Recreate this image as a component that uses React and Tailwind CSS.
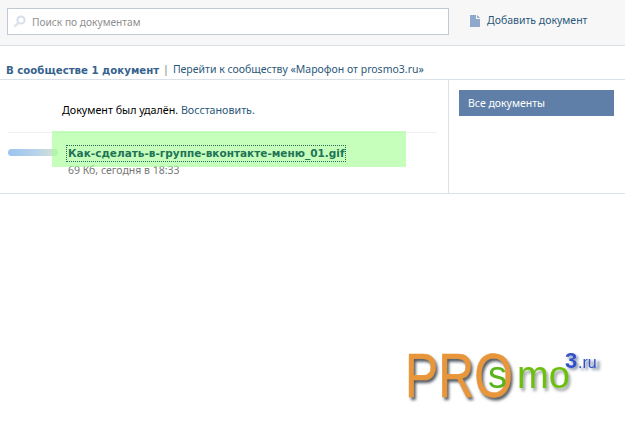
const Logo = () => (
  <svg width="210" height="64" viewBox="0 0 210 64" className="block">
    <defs>
      <filter id="soft" x="-10%" y="-10%" width="130%" height="130%">
        <feGaussianBlur stdDeviation="0.4" />
      </filter>
      <filter id="shadow" x="-10%" y="-10%" width="130%" height="130%">
        <feGaussianBlur stdDeviation="1.5" />
      </filter>
    </defs>
    <g fontFamily="'Liberation Sans', sans-serif">
      <g filter="url(#shadow)">
        <text x="7" y="58" fontSize="63" fill="#50565f" textLength="108" lengthAdjust="spacingAndGlyphs">PRO</text>
        <text x="119" y="49" fontSize="38" fill="#9aa0a0">mo</text>
        <text x="167" y="28" fontSize="22" fontWeight="700" fill="#7d8aa5">3</text>
        <text x="180" y="28" fontSize="16" fontWeight="700" fill="#7d8aa5">.ru</text>
      </g>
      <g filter="url(#soft)">
        <text x="5" y="55" fontSize="63" fill="#e8963a" stroke="#e8963a" strokeWidth="0.6" textLength="108" lengthAdjust="spacingAndGlyphs">PRO</text>
        <text x="88" y="46" fontSize="38" fill="#58b41a">s</text>
        <text x="117" y="46" fontSize="38" fill="#6cc010">mo</text>
        <text x="165" y="26" fontSize="22" fontWeight="700" fill="#3050c8">3</text>
        <text x="178" y="26" fontSize="16" fill="#3050c8">.ru</text>
      </g>
    </g>
  </svg>
);

export default function App() {
  return (
    <div className="min-h-[434px] bg-white font-['Noto_Sans',sans-serif] text-[10.5px] text-black">
      <div className="w-[625px] border-b border-[#dae1e8]">
        {/* search bar */}
        <div className="flex h-[46px] items-start border-b border-[#dae1e8] bg-[#f7f7f7] pt-2 pl-[7px]">
          <div className="flex h-[27px] w-[442px] items-center border border-[#c0cad5] bg-white pl-[5px]">
            <svg width="13" height="13" viewBox="0 0 13 13" className="shrink-0">
              <circle cx="8" cy="5" r="3.6" fill="none" stroke="#d5dfe9" strokeWidth="2" />
              <path d="M5.4 7.8 1.5 11.6" stroke="#dde5ee" strokeWidth="2.6" />
            </svg>
            <span className="mt-[2px] ml-[6px] text-[10.2px] text-[#8f8f8f]">Поиск по документам</span>
          </div>
          <div className="ml-[21px] flex h-[26px] items-center text-[#2b587a]">
            <svg width="10" height="12" viewBox="0 0 10 12" className="shrink-0">
              <path d="M0 0H6V4H10V12H0Z" fill="#8fa8cc" />
              <path d="M7 0 10 3H7Z" fill="#8fa8cc" />
            </svg>
            <span className="ml-[7px]">Добавить документ</span>
          </div>
        </div>

        {/* summary */}
        <div className="flex h-[34px] items-end border-b border-[#dae1e8] pb-px pl-1.5 text-[#2b587a]">
          <b className="font-['DejaVu_Sans',sans-serif] text-[10.2px] text-[#36638e]">В сообществе 1 документ</b>
          <span className="mx-[4px] text-[#777]">|</span>
          <span>Перейти к сообществу «Марофон от prosmo3.ru»</span>
        </div>

        <div className="flex h-[113px]">
          <div className="relative w-[449px] border-r border-[#dae1e8] pr-[11px] pl-2">
            <div className="h-[53px] border-b border-[#eceff3] pt-[22px] pl-[54px] text-[10.7px]">
              Документ был удалён. <span className="text-[#2b587a]">Восстановить.</span>
            </div>
            <div className="flex pt-[12px]">
              <div className="mt-[4px] h-[7px] w-[50px] shrink-0 rounded-sm bg-gradient-to-r from-[#9cc4ec] via-[#b4d0ec] to-[#d5e4d2]" />
              <div className="ml-2">
                <div className="relative z-10 border border-dotted border-[#2a6a55] px-px leading-[15px] font-['DejaVu_Sans',sans-serif] font-bold text-[#1f7356]">
                  Как-сделать-в-группе-вконтакте-меню_01.gif
                </div>
                <div className="mt-px pl-[2px] text-[#777]">69 Кб, сегодня в 18:33</div>
              </div>
            </div>
            {/* selection highlight lying over the row */}
            <div className="absolute top-[51px] left-[52px] h-[36px] w-[354px] bg-[#a0ff90]/60" />
          </div>
          <div className="flex-1 pt-[10px] pl-[10px]">
            <div className="flex h-[26px] w-[155px] items-center bg-[#5f7fa8] pt-[2px] pl-[9px] text-white">Все документы</div>
          </div>
        </div>
      </div>

      <div className="mt-[148px] ml-[400px]">
        <Logo />
      </div>
    </div>
  );
}
